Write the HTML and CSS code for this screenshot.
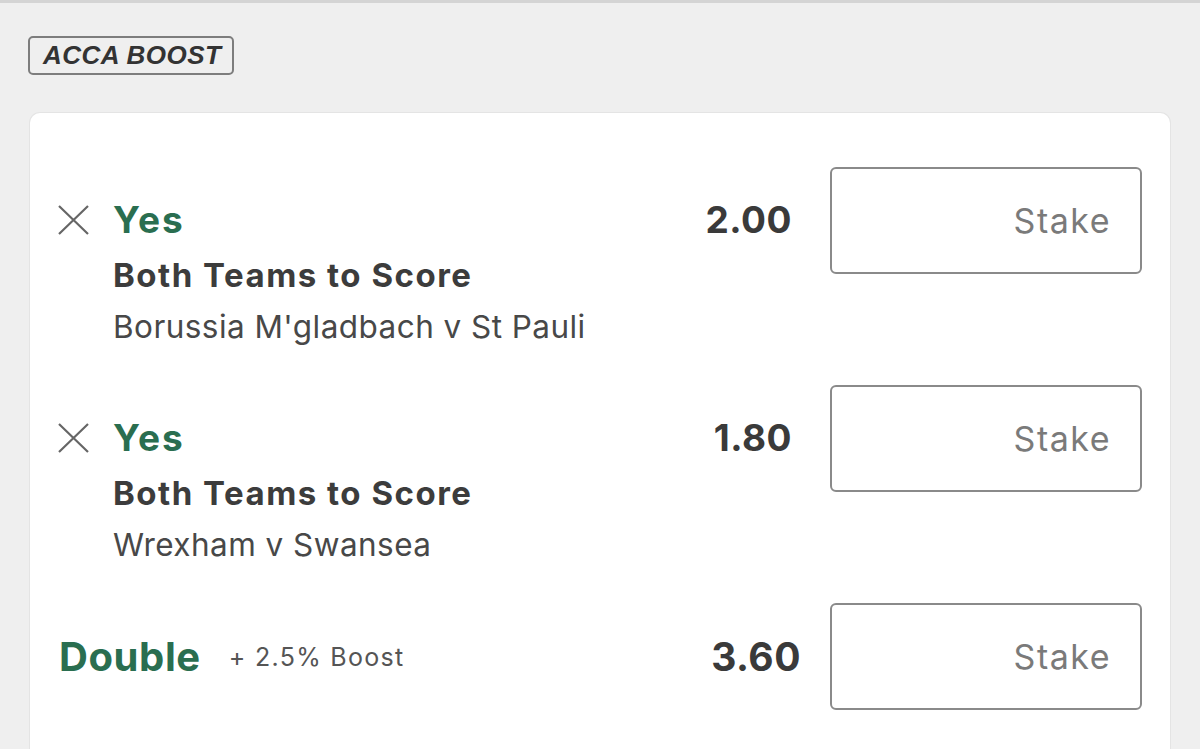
FILE: index.html
```html
<!DOCTYPE html>
<html>
<head>
<meta charset="utf-8">
<link rel="stylesheet" href="styles.css">
</head>
<body>
<div class="page">
  <div class="badge">ACCA BOOST</div>
  <div class="card">
    <div class="bet">
      <div class="info">
        <div class="sel">
          <svg class="remove" width="31" height="30" viewBox="0 0 31 30"><path d="M1 1 L30 29 M30 1 L1 29" stroke="#666" stroke-width="2.2" fill="none"/></svg>
          <span class="pick">Yes</span>
        </div>
        <div class="market">Both Teams to Score</div>
        <div class="event">Borussia M'gladbach v St Pauli</div>
      </div>
      <div class="odds">2.00</div>
      <div class="stake">Stake</div>
    </div>
    <div class="bet">
      <div class="info">
        <div class="sel">
          <svg class="remove" width="31" height="30" viewBox="0 0 31 30"><path d="M1 1 L30 29 M30 1 L1 29" stroke="#666" stroke-width="2.2" fill="none"/></svg>
          <span class="pick">Yes</span>
        </div>
        <div class="market">Both Teams to Score</div>
        <div class="event">Wrexham v Swansea</div>
      </div>
      <div class="odds">1.80</div>
      <div class="stake">Stake</div>
    </div>
    <div class="bet multi">
      <div class="info">
        <span class="multi-name">Double</span>
        <span class="boost">+ 2.5% Boost</span>
      </div>
      <div class="odds">3.60</div>
      <div class="stake">Stake</div>
    </div>
  </div>
</div>
</body>
</html>
```
FILE: styles.css
```css
html, body {
  margin: 0;
  padding: 0;
  background: #efefef;
  overflow: hidden;
}
body {
  border-top: 3px solid #d4d4d4;
  font-family: Inter, "Liberation Sans", sans-serif;
  color: #3a3a3a;
}
.page {
  padding: 33px 30px 0 28px;
}
.badge {
  display: inline-flex;
  align-items: center;
  height: 35px;
  padding: 0 11px 0 13px;
  border: 2.5px solid #7d7d7d;
  border-radius: 5px;
  font-family: "Liberation Sans", sans-serif;
  font-weight: bold;
  font-style: italic;
  font-size: 26px;
  color: #333;
  letter-spacing: 0.45px;
}
.card {
  margin-top: 38px;
  margin-left: 2px;
  background: #fff;
  border-radius: 10px;
  box-shadow: 0 0 0 1px #e4e4e4;
  padding: 54px 28px 60px 28px;
  display: flex;
  flex-direction: column;
  gap: 32px;
}
.bet {
  display: flex;
  align-items: flex-start;
}
.info {
  flex: 1;
  margin-top: 24px;
}
.sel {
  display: flex;
  align-items: center;
  height: 58px;
  gap: 24px;
}
.remove {
  display: block;
  flex: none;
}
.pick {
  color: #2a6e50;
  font-weight: 700;
  font-size: 37px;
  line-height: 58px;
  letter-spacing: 2px;
}
.market {
  padding-left: 55px;
  font-weight: 700;
  font-size: 33px;
  line-height: 52px;
  letter-spacing: 1.5px;
  color: #3c3c3c;
}
.event {
  padding-left: 55px;
  font-size: 31.5px;
  line-height: 52px;
  letter-spacing: 0.45px;
  color: #484848;
}
.odds {
  margin-top: 24px;
  line-height: 58px;
  font-weight: 700;
  font-size: 37px;
  letter-spacing: 0.5px;
  color: #3a3a3a;
  margin-right: 38px;
}
.stake {
  box-sizing: border-box;
  width: 312px;
  height: 107px;
  border: 2px solid #8a8a8a;
  border-radius: 6px;
  display: flex;
  align-items: center;
  justify-content: flex-end;
  padding-right: 29px;
  font-size: 34px;
  letter-spacing: 1.5px;
  color: #7a7a7a;
}
.multi {
  align-items: center;
}
.multi .info {
  margin-top: 0;
  display: flex;
  align-items: center;
  padding-left: 1px;
}
.multi-name {
  color: #2a6e50;
  font-weight: 700;
  font-size: 40px;
  letter-spacing: 0.6px;
}
.boost {
  margin-left: 28px;
  font-size: 25px;
  letter-spacing: 1.3px;
  color: #555;
}
.multi .odds {
  margin-top: 0;
  font-size: 39px;
  margin-right: 29px;
}
```
